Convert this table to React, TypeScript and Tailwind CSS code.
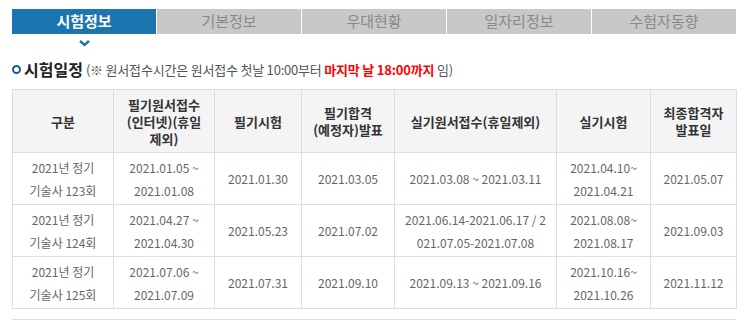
import React from "react";

const tabs = ["시험정보", "기본정보", "우대현황", "일자리정보", "수험자동향"];

const headers: React.ReactNode[] = [
  "구분",
  <>필기원서접수<br />(인터넷)(휴일<br />제외)</>,
  "필기시험",
  <>필기합격<br />(예정자)발표</>,
  "실기원서접수(휴일제외)",
  "실기시험",
  <>최종합격자<br />발표일</>,
];

const widths = ["w-[101px]", "w-[101px]", "w-[87px]", "w-[93px]", "w-[162px]", "w-[94px]", "w-[86px]"];

const rows: React.ReactNode[][] = [
  [
    <>2021년 정기<br />기술사 123회</>,
    <>2021.01.05 ~<br />2021.01.08</>,
    "2021.01.30",
    "2021.03.05",
    "2021.03.08 ~ 2021.03.11",
    <>2021.04.10~<br />2021.04.21</>,
    "2021.05.07",
  ],
  [
    <>2021년 정기<br />기술사 124회</>,
    <>2021.04.27 ~<br />2021.04.30</>,
    "2021.05.23",
    "2021.07.02",
    <>2021.06.14-2021.06.17 / 2<br />021.07.05-2021.07.08</>,
    <>2021.08.08~<br />2021.08.17</>,
    "2021.09.03",
  ],
  [
    <>2021년 정기<br />기술사 125회</>,
    <>2021.07.06 ~<br />2021.07.09</>,
    "2021.07.31",
    "2021.09.10",
    "2021.09.13 ~ 2021.09.16",
    <>2021.10.16~<br />2021.10.26</>,
    "2021.11.12",
  ],
];

export default function App() {
  return (
    <div className="w-[747px] h-[320px] overflow-hidden bg-white px-[12px] pt-[9px] font-['Noto_Sans_CJK_KR',sans-serif]">
      {/* Tabs */}
      <div className="flex gap-px w-[724px]">
        {tabs.map((t, i) => (
          <div
            key={t}
            className={
              i === 0
                ? "flex-1 h-[25px] flex items-center justify-center bg-[#1b76b0] text-white font-bold text-[15px]"
                : "flex-1 h-[25px] flex items-center justify-center bg-[#c8c8c8] text-[#888] text-[15px]"
            }
          >
            {t}
          </div>
        ))}
      </div>
      <div className="w-[144px] flex justify-center pt-[6px] h-[18px]">
        <svg width="11" height="7" viewBox="0 0 11 7">
          <path d="M1 1 L5.5 5 L10 1" stroke="#1b76b0" strokeWidth="2.4" fill="none" />
        </svg>
      </div>

      {/* Heading */}
      <div className="flex items-center h-[22px] mt-[6px]">
        <span className="w-[9px] h-[9px] rounded-full border-[2.5px] border-[#1b5b94] mr-[3px]" />
        <span className="text-[16px] font-bold text-[#222] leading-none">시험일정</span>
        <span className="text-[13px] text-[#555] ml-[3px] leading-none tracking-[-0.2px]">
          (※ 원서접수시간은 원서접수 첫날 10:00부터{" "}
          <span className="text-[#f00] font-bold">마지막 날 18:00까지</span> 임)
        </span>
      </div>

      {/* Table */}
      <table className="mt-[9px] w-[724px] border-collapse table-fixed">
        <colgroup>
          {widths.map((w, i) => (
            <col key={i} className={w} />
          ))}
        </colgroup>
        <thead>
          <tr>
            {headers.map((h, i) => (
              <th
                key={i}
                className="h-[63px] bg-[#f4f4f4] border border-[#ddd] text-[13px] font-bold text-[#333] leading-[17px] text-center align-middle p-0"
              >
                {h}
              </th>
            ))}
          </tr>
        </thead>
        <tbody>
          {rows.map((r, ri) => (
            <tr key={ri}>
              {r.map((c, ci) => (
                <td
                  key={ci}
                  className="h-[52px] border border-[#ddd] text-[12px] text-[#666] leading-[23px] text-center align-middle p-0"
                >
                  {c}
                </td>
              ))}
            </tr>
          ))}
        </tbody>
      </table>
      <div className="mt-[10px] w-[724px] border-t border-[#ddd]" />
    </div>
  );
}
